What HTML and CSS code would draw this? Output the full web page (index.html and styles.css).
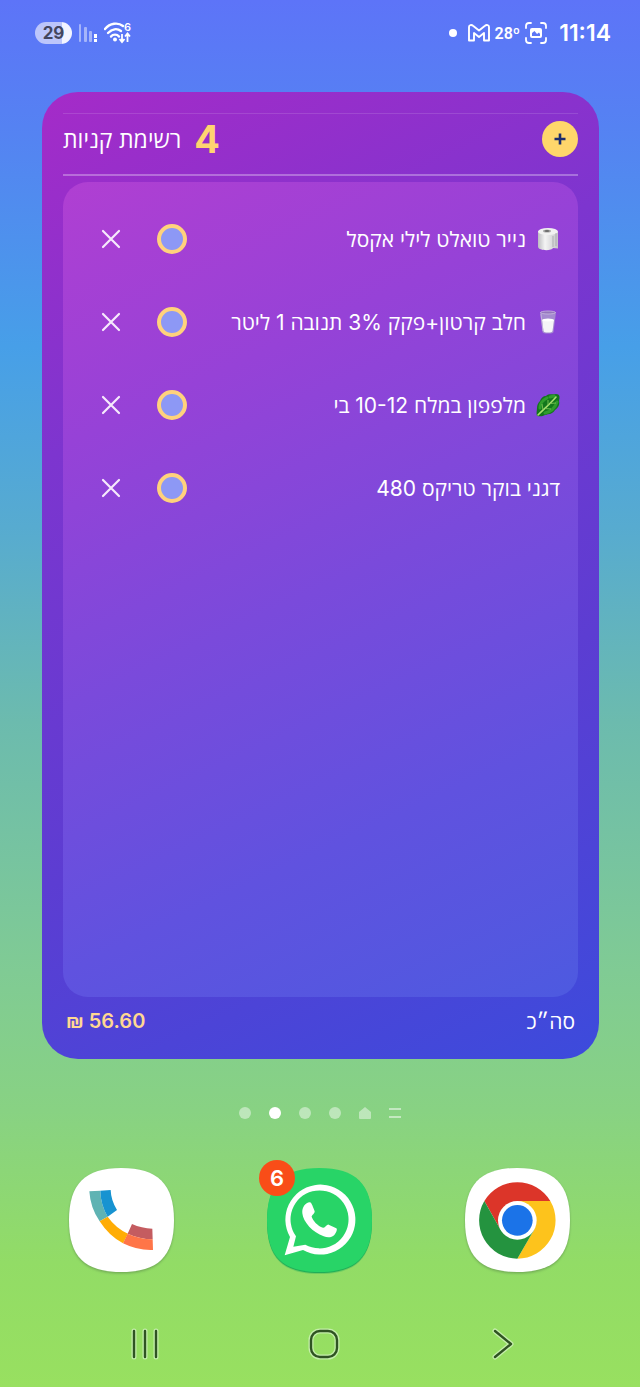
FILE: index.html
```html
<!DOCTYPE html>
<html lang="he">
<head>
  <meta charset="UTF-8">
  <meta name="viewport" content="width=device-width, initial-scale=1">
  <title>רשימת קניות</title>
  <link rel="stylesheet" href="styles.css">
</head>
<body>
  <header class="status-bar">
    <div class="status-left">
      <span class="battery">29</span>
      <svg class="signal" width="20" height="22" viewBox="0 0 20 22">
        <g fill="#fff" opacity="0.45">
          <rect x="1" y="2" width="2" height="18" rx="1"/>
          <rect x="6" y="5" width="3" height="15" rx="1"/>
          <rect x="11" y="9" width="3" height="11" rx="1"/>
        </g>
        <rect x="16" y="12" width="3" height="4" fill="#fff"/>
        <rect x="16" y="17" width="3" height="3" fill="#fff"/>
      </svg>
      <svg class="wifi" width="30" height="24" viewBox="0 0 30 24">
        <g fill="none" stroke="#fff" stroke-width="2.4" stroke-linecap="round">
          <path d="M1 8C6 2 14 1 19 5"/>
          <path d="M4 12C8 8 13 7 17 10"/>
          <path d="M7 15.500C9 13 13 13 15 15.500"/>
        </g>
        <circle cx="11" cy="18.500" r="2" fill="#fff"/>
        <path d="M18 13V21M15.500 18L18 21L20.500 18M23.500 21V13M21 15.500L23.500 12.500L26 15.500" fill="none" stroke="#fff" stroke-width="1.800"/>
        <text x="20" y="10" class="wifi-gen">6</text>
      </svg>
    </div>
    <div class="status-right">
      <span class="status-dot"></span>
      <svg class="gmail" width="22" height="18" viewBox="0 0 22 18">
        <path d="M1 16.500V3C1 1 3.500 .5 5 1.800L11 6.500L17 1.800C18.500 .5 21 1 21 3V16.500H16V9L11 13L6 9V16.500Z" fill="none" stroke="#fff" stroke-width="1.900" stroke-linejoin="round"/>
      </svg>
      <span class="temp">28º</span>
      <svg class="capture" width="22" height="22" viewBox="0 0 22 22">
        <path d="M1 6V4Q1 1 4 1H6M16 1H18Q21 1 21 4V6M21 16V18Q21 21 18 21H16M6 21H4Q1 21 1 18V16" fill="none" stroke="#fff" stroke-width="1.800" stroke-linecap="round"/>
        <rect x="5" y="6" width="12" height="10" rx="2" fill="#fff"/>
        <path d="M7 14V11L9.500 9L12 12L14 10.500L15 12V14Z" fill="#5d76f5"/>
      </svg>
      <time class="clock">11:14</time>
    </div>
  </header>

  <main class="widget">
    <div class="widget-header">
      <h1>רשימת קניות</h1>
      <span class="count">4</span>
      <button class="add" aria-label="הוספה">
        <svg width="12" height="12" viewBox="0 0 12 12"><path d="M6 0.500V11.500M.5 6H11.500" stroke="#1c2c6c" stroke-width="2.600"/></svg>
      </button>
    </div>

    <ul class="items" dir="rtl">
      <li class="item">
        <label for="item1">
          <svg class="emoji" width="24" height="24" viewBox="0 0 24 24">
            <defs>
              <linearGradient id="paper"><stop offset="0" stop-color="#bcbcc0"/><stop offset=".35" stop-color="#f4f4f4"/><stop offset="1" stop-color="#c4c4c8"/></linearGradient>
            </defs>
            <path d="M2 4V20C3 24 16 24 17 21L22 21.500V5Z" fill="url(#paper)"/>
            <ellipse cx="12" cy="4.500" rx="10" ry="3.600" fill="#f1f1f1"/>
            <ellipse cx="11" cy="4" rx="4" ry="1.500" fill="#aaa"/>
            <ellipse cx="11" cy="4" rx="2.500" ry=".8" fill="#555"/>
            <path d="M17 9V20M20 6V19" stroke="#a5a5aa" stroke-width=".8"/>
          </svg>
          <span>נייר טואלט לילי אקסל</span>
        </label>
        <input type="checkbox" id="item1">
        <button class="remove" aria-label="מחיקה"><svg width="20" height="20" viewBox="0 0 20 20"><path d="M2 2L18 18M18 2L2 18"/></svg></button>
      </li>
      <li class="item">
        <label for="item2">
          <svg class="emoji" width="24" height="24" viewBox="0 0 24 24">
            <path d="M4 2H20L17.500 22Q17 23.500 12 23.500T6.500 22Z" fill="#a58bd0"/>
            <path d="M6 10H18L16.500 21Q16 22.500 12 22.500T7.500 21Z" fill="#f5f5f7"/>
            <ellipse cx="12" cy="10" rx="6" ry="1.500" fill="#fff"/>
            <ellipse cx="12" cy="2.500" rx="7.500" ry="1.500" fill="#9477bd" stroke="#c9bade" stroke-width=".8"/>
            <path d="M5 4L7 21" stroke="#c9bade" stroke-width=".8"/>
          </svg>
          <span>חלב קרטון+פקק 3% תנובה 1 ליטר</span>
        </label>
        <input type="checkbox" id="item2">
        <button class="remove" aria-label="מחיקה"><svg width="20" height="20" viewBox="0 0 20 20"><path d="M2 2L18 18M18 2L2 18"/></svg></button>
      </li>
      <li class="item">
        <label for="item3">
          <svg class="emoji" width="24" height="24" viewBox="0 0 24 24">
            <path d="M1 23C0 20 1 18 1 15C1 12 2 10 4 8C5 5 7 3 10 3C13 0 16 2 20 1C24 1 24 4 23 8C24 12 22 15 19 17C17 21 13 21 9 22C6 24 3 23 1 23Z" fill="#12761c"/>
            <path d="M4 15C4 11 7 7 11 5M9 20C14 19 19 15 21 9M14 4L18 3" fill="none" stroke="#2f9d2c" stroke-width="3" stroke-linecap="round"/>
            <path d="M2 22C7 17 13 12 20 4" fill="none" stroke="#a9e070" stroke-width="1.600" stroke-linecap="round"/>
            <path d="M7 17L6 11M12 12.500L12 7M9 15.500L15 16M14 10.500L20 10" fill="none" stroke="#7cc653" stroke-width=".9"/>
          </svg>
          <span>מלפפון במלח 10-12 בי</span>
        </label>
        <input type="checkbox" id="item3">
        <button class="remove" aria-label="מחיקה"><svg width="20" height="20" viewBox="0 0 20 20"><path d="M2 2L18 18M18 2L2 18"/></svg></button>
      </li>
      <li class="item">
        <label for="item4"><span>דגני בוקר טריקס 480</span></label>
        <input type="checkbox" id="item4">
        <button class="remove" aria-label="מחיקה"><svg width="20" height="20" viewBox="0 0 20 20"><path d="M2 2L18 18M18 2L2 18"/></svg></button>
      </li>
    </ul>

    <div class="widget-footer">
      <span class="sum">₪ 56.60</span>
      <span class="sum-label" dir="rtl">סה״כ</span>
    </div>
  </main>

  <div class="pages">
    <span class="page"></span>
    <span class="page active"></span>
    <span class="page"></span>
    <span class="page"></span>
    <svg width="12" height="12" viewBox="0 0 12 12"><path d="M6 0L12 5V11Q12 12 11 12H1Q0 12 0 11V5Z" fill="#fff" opacity="0.45"/></svg>
    <svg width="12" height="12" viewBox="0 0 12 12"><path d="M0 2H12M0 10H12" stroke="#fff" stroke-width="2" opacity="0.5"/></svg>
  </div>

  <nav class="dock">
    <a href="#" class="app" aria-label="טלפון">
      <svg viewBox="0 0 315 315">
        <path class="tile" d="M0 157C0 48 48 0 157 0S315 48 315 157S267 312 157 312S0 267 0 157Z" fill="#fff"/>
        <g transform="translate(-58 -54)">
          <path d="M119 124L152 122Q153 165 174 200L150 214Q122 174 119 124Z" fill="#5fb3b3"/>
          <path d="M152 122L183 120Q184 151 202 180L174 200Q153 165 152 122Z" fill="#1793d1"/>
          <path d="M174 200Q198 234 235 251L220 280Q178 258 150 214Z" fill="#ffad05"/>
          <path d="M247 222Q276 235 308 236L309 268Q268 267 234 251Z" fill="#c45c60"/>
          <path d="M234 251Q268 267 309 268L310 300Q264 302 220 280Z" fill="#ff7548"/>
        </g>
      </svg>
    </a>
    <a href="#" class="app" aria-label="WhatsApp">
      <svg viewBox="0 0 315 315">
        <path class="tile green" d="M0 157C0 48 48 0 157 0S315 48 315 157S267 312 157 312S0 267 0 157Z" fill="#28d467"/>
        <path fill="#fff" fill-rule="evenodd" d="M53 262L69 207A105 105 0 1 1 108 246ZM79 236L115 230A87 87 0 1 0 87 205Z"/>
        <path transform="translate(-52 -54)" fill="#fff" d="M158 190C156 172 168 158 180 157C185 157 187 163 195 184C196 190 186 196 186 200C190 212 204 228 220 233C226 235 232 222 237 224L260 235C264 237 260 248 254 255C246 263 234 264 222 259C190 248 160 216 158 190Z"/>
      </svg>
      <span class="badge">6</span>
    </a>
    <a href="#" class="app" aria-label="Chrome">
      <svg viewBox="0 0 315 315">
        <path class="tile" d="M0 157C0 48 48 0 157 0S315 48 315 157S267 312 157 312S0 267 0 157Z" fill="#fff"/>
        <g transform="translate(157 157)">
          <path d="M-99 -58A115 115 0 0 1 99 -58L0 -58L-50 29Z" fill="#dc3529"/>
          <path d="M99 -58A115 115 0 0 1 0 115L50 29L0 -58Z" fill="#fdc31c"/>
          <path d="M0 115A115 115 0 0 1 -99 -58L-50 29L50 29Z" fill="#24933f"/>
          <circle r="58" fill="#fff"/>
          <circle r="46" fill="#1b73e8"/>
        </g>
      </svg>
    </a>
  </nav>

  <div class="system-nav">
    <button aria-label="יישומים אחרונים">
      <svg width="32" height="32" viewBox="0 0 32 32"><path class="halo" d="M5 3V29M16 3V29M27 3V29"/><path d="M5 3V29M16 3V29M27 3V29"/></svg>
    </button>
    <button aria-label="בית">
      <svg width="32" height="32" viewBox="0 0 32 32"><rect class="halo" x="3" y="3" width="26" height="26" rx="9"/><rect x="3" y="3" width="26" height="26" rx="9"/></svg>
    </button>
    <button aria-label="חזרה">
      <svg width="32" height="32" viewBox="0 0 32 32"><path class="halo" d="M8 3L24 16L8 29"/><path d="M8 3L24 16L8 29"/></svg>
    </button>
  </div>
</body>
</html>
```

FILE: styles.css
```css
* {
  margin: 0;
  padding: 0;
  box-sizing: border-box;
}
body {
  display: flex;
  flex-direction: column;
  min-height: 100vh;
  background: linear-gradient(#5d74f8 0%, #5680f3 8%, #479fe8 25%, #57abd0 38%, #6cbbae 52%, #80cb94 70%, #88d283 80%, #92dc66 91%, #98e060 100%);
  font-family: Inter, "Open Sans", "Noto Sans", sans-serif;
  color: #fff;
}
button {
  border: none;
  background: none;
  cursor: pointer;
}
svg {
  display: block;
}
.status-bar {
  display: flex;
  justify-content: space-between;
  align-items: center;
  height: 66px;
  padding: 0 29px 0 35px;
}
.status-left,
.status-right {
  display: flex;
  align-items: center;
}
.status-left {
  gap: 6px;
}
.status-right {
  gap: 5px;
}
.battery {
  width: 37px;
  height: 22px;
  border-radius: 11px;
  background: linear-gradient(90deg, #bcc6fb 72%, #f2f4ff 72%);
  color: #43465e;
  font-size: 17px;
  font-weight: 700;
  line-height: 22px;
  text-align: center;
}
.wifi-gen {
  fill: #fff;
  font-size: 11px;
  font-weight: 600;
}
.status-dot {
  width: 8px;
  height: 8px;
  margin-right: 6px;
  border-radius: 50%;
  background: #fff;
}
.temp {
  font-family: Roboto, sans-serif;
  font-size: 16px;
  font-weight: 600;
}
.clock {
  margin-left: 7px;
  font-size: 23px;
  font-weight: 600;
}
.widget {
  flex: 1;
  display: flex;
  flex-direction: column;
  margin: 26px 41px 0 42px;
  padding: 21px 21px 0;
  border-radius: 36px;
  background: linear-gradient(155deg, #a52bc8 0%, #7d35cf 30%, #5c3dd2 65%, #3c4bdc 100%);
}
.widget-header {
  display: flex;
  align-items: center;
  gap: 13px;
  height: 63px;
  padding-bottom: 10px;
  border-top: 1px solid rgba(255, 255, 255, 0.12);
  border-bottom: 2px solid rgba(255, 255, 255, 0.3);
}
.widget-header h1 {
  font-size: 23px;
  font-weight: 400;
}
.count {
  color: #ffd470;
  font-size: 38px;
  font-weight: 700;
}
.add {
  display: flex;
  justify-content: center;
  align-items: center;
  width: 36px;
  height: 36px;
  margin-left: auto;
  border-radius: 50%;
  background: #ffd66b;
}
.items {
  flex: 1;
  margin-top: 6px;
  padding: 15px 18px;
  border-radius: 25px;
  background: linear-gradient(155deg, #b03fd2 0%, #9642d7 25%, #7a4adb 50%, #6052df 75%, #4d5ae0 100%);
  list-style: none;
}
.item {
  display: flex;
  align-items: center;
  height: 83px;
}
.item label {
  flex: 1;
  display: flex;
  align-items: center;
  gap: 10px;
  font-size: 21px;
}
.item input {
  appearance: none;
  width: 30px;
  height: 30px;
  border: 4px solid #ffd27c;
  border-radius: 50%;
  background: #8d98f5;
  cursor: pointer;
}
.item input:checked {
  background: #ffd27c;
}
.remove {
  margin: 0 36px 0 20px;
}
.remove path {
  stroke: #f6eafc;
  stroke-width: 2.2;
  stroke-linecap: round;
}
.widget-footer {
  display: flex;
  justify-content: space-between;
  align-items: center;
  height: 62px;
  padding: 0 3px 14px;
  font-size: 21px;
}
.sum {
  color: #ffd892;
  font-weight: 600;
  font-size: 20px;
}
.pages {
  display: flex;
  justify-content: center;
  gap: 18px;
  padding: 48px 0 49px;
}
.page {
  width: 12px;
  height: 12px;
  border-radius: 50%;
  background: rgba(255, 255, 255, 0.45);
}
.page.active {
  background: #fff;
}
.dock {
  display: flex;
  justify-content: space-between;
  padding: 0 70px 0 69px;
}
.app {
  position: relative;
  width: 105px;
  height: 105px;
}
.tile {
  filter: drop-shadow(0 4px 3px rgba(60, 90, 60, 0.4));
}
.tile.green {
  filter: drop-shadow(0 4px 1px #20ad58);
}
.app svg {
  overflow: visible;
}
.badge {
  position: absolute;
  top: -8px;
  left: -8px;
  width: 36px;
  height: 36px;
  border-radius: 50%;
  background: #f94d18;
  color: #fff;
  font-size: 22px;
  font-weight: 600;
  line-height: 36px;
  text-align: center;
}
.system-nav {
  display: flex;
  justify-content: space-between;
  padding: 55px 121px 27px 129px;
}
.system-nav svg {
  fill: none;
  stroke: #2f5322;
  stroke-width: 2.4;
  stroke-linecap: round;
  stroke-linejoin: round;
}
.system-nav .halo {
  stroke: #c5eeab;
  stroke-width: 5;
}
```
